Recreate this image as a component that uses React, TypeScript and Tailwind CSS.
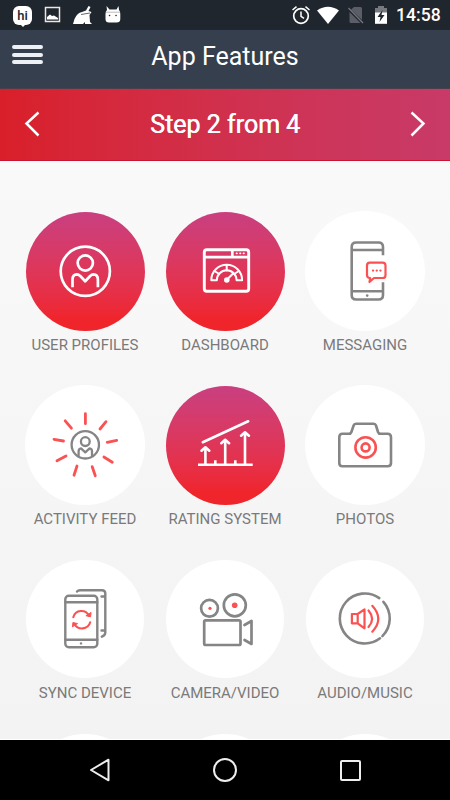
import type { ReactNode } from "react";
import clsx from "clsx";

const GRAY = "#858585";
const RED = "#fa5252";

function Glyph({ color, width = 2.4, children }: { color: string; width?: number; children: ReactNode }) {
  return (
    <svg
      viewBox="0 0 120 120"
      className="h-[120px] w-[120px]"
      fill="none"
      stroke={color}
      strokeWidth={width}
      strokeLinecap="round"
      strokeLinejoin="round"
    >
      {children}
    </svg>
  );
}

const UserIcon = () => (
  <Glyph color="#fff" width={2.7}>
    <circle cx="60.3" cy="60.3" r="24.6" />
    <circle cx="60.3" cy="52" r="7.6" />
    <path d="M47.5 76.2V68.5Q47.5 63.5 52 63.3Q53.7 63.3 55 64.8L60.2 70.3L65.4 64.8Q66.7 63.3 68.4 63.3Q72.9 63.5 72.9 68.5V76.2" strokeLinecap="butt" />
  </Glyph>
);

const DashboardIcon = () => (
  <Glyph color="#fff" width={2}>
    <rect x="39.3" y="38.8" width="44.4" height="41.4" rx="2.5" strokeWidth="2.9" />
    <path d="M39.3 46.2H83.7M67.3 39V46" strokeWidth="2.7" strokeLinecap="butt" />
    <path d="M71.5 42.3H72M75 42.3H75.5M78.5 42.3H79" strokeWidth="1.7" />
    <path d="M46.3 69.2A15.4 15.4 0 0 1 77.1 69.2H71.6A9.9 9.9 0 0 0 51.8 69.2Z" />
    <path d="M61.7 54V59.5M49.5 60L54.2 63M73.9 60L69.2 63" />
    <path d="M62 68.5L67.6 63" />
    <circle cx="61.8" cy="69" r="1.8" fill="#fff" />
  </Glyph>
);

const MessageIcon = () => (
  <Glyph color={GRAY} width={2.6}>
    <path d="M78 44.3V36Q78 31.5 73.5 31.5H51.2Q46.7 31.5 46.7 36V84Q46.7 88.5 51.2 88.5H73.5Q78 88.5 78 84V71.2" strokeLinecap="butt" />
    <path d="M46.7 39H78M46.7 80.3H78" strokeLinecap="butt" />
    <circle cx="62.2" cy="84.6" r="1.3" fill={GRAY} stroke="none" />
    <g stroke={RED} strokeWidth="2.2">
      <path d="M64.3 67Q62 66.6 62 64V54.5Q62 51.7 64.8 51.7H77.7Q80.5 51.7 80.5 54.5V64.2Q80.5 67 77.7 67H69L64.5 71L65.2 67.1Z" />
      <path d="M68 59.6H68.1M71.7 59.6H71.8M75.4 59.6H75.5" strokeWidth="2.3" />
    </g>
  </Glyph>
);

const ActivityIcon = () => (
  <Glyph color={GRAY} width={2.3}>
    <circle cx="60.3" cy="59.8" r="13.7" />
    <circle cx="60.3" cy="56.6" r="4.4" />
    <path d="M53.6 70.5V66.5Q53.6 63.5 56 63.3L60.3 67.3L64.6 63.3Q67 63.5 67 66.5V70.5" />
    <path
      stroke={RED}
      strokeWidth="2.8"
      d="M60.4 28.7V38.7M81 36.7L75 44M91.7 55.4L82.2 57.3M87.3 77.3L78.9 72M70.3 90.8L67.2 81.7M49 90.2L52 81M32 75.8L41 71M29 54.3L38.5 56M40.2 35.8L46.4 43.2"
    />
  </Glyph>
);

const RatingIcon = () => (
  <Glyph color="#fff" width={2.6}>
    <path d="M37.8 57.3L83.2 36.3" />
    <path d="M33 79.7H87.7M40.4 79V63M60.2 79V55.5M80 79V48M50.3 79V75.2M70.3 79V75.2" strokeLinecap="butt" />
    <path d="M36.5 65.7L40.4 62.3L44.3 65.7M56.3 58.2L60.2 54.8L64.1 58.2M76.1 50.7L80 47.3L83.9 50.7" />
  </Glyph>
);

const PhotoIcon = () => (
  <Glyph color={GRAY} width={2.6}>
    <path d="M37.5 48.8H43.8Q45.8 48.8 46.4 47L48.6 40.5Q49.2 38.8 51 38.8H68.6Q70.4 38.8 71 40.5L73 47Q73.6 48.8 75.6 48.8H82.5Q86 48.8 86 52.3V78Q86 81.3 82.5 81.3H37.5Q34.3 81.3 34.3 78V52.3Q34.3 48.8 37.5 48.8Z" />
    <g stroke={RED}>
      <circle cx="60.6" cy="62.4" r="10.2" />
      <circle cx="60.6" cy="62.4" r="4" />
    </g>
  </Glyph>
);

const SyncIcon = () => (
  <Glyph color={GRAY}>
    <rect x="40.3" y="36.8" width="32" height="51.4" rx="3.5" />
    <path d="M40.3 43.2H72.3M40.3 80.8H72.3" />
    <path d="M52 32.6Q53 31.3 55 31.3H77Q80.3 31.3 80.3 34.6V73.5Q80.3 76.5 76.8 77.7M76.5 37.5H80M76.5 71.5H80" />
    <circle cx="56" cy="84.4" r="1.2" fill={GRAY} stroke="none" />
    <g stroke={RED} strokeWidth="2.1">
      <path d="M48.3 58.2C50.5 50.5 60.5 50 64 56.7M65.2 63.3C63 71 53 71.3 49.3 65" />
      <path d="M61.3 56.8L65.6 57.8L66 53.8ZM52.2 64.5L47.9 63.5L47.5 67.5Z" fill={RED} strokeWidth="1" />
    </g>
  </Glyph>
);

const VideoIcon = () => (
  <Glyph color={GRAY} width={2.7}>
    <rect x="39.2" y="61.3" width="36.3" height="24.7" rx="1.5" />
    <circle cx="44.5" cy="49.3" r="8.4" />
    <circle cx="69.8" cy="46.3" r="11" />
    <path d="M79.5 66L86.5 62V85L79.5 81" />
    <circle cx="45" cy="49.3" r="1.6" fill={RED} stroke="none" />
    <circle cx="69.7" cy="46.3" r="2.8" fill={RED} stroke="none" />
  </Glyph>
);

const AudioIcon = () => (
  <Glyph color={GRAY} width={2.6}>
    <path d="M74.3 39.1A25 25 0 1 0 75 79.3M78.4 42.8A25 25 0 0 1 77.4 77.1" />
    <g stroke={RED} strokeWidth="2.2">
      <path d="M46.9 55H52.7L59.5 50.3V69.3L52.7 64.3H46.9ZM52.7 55V64.3" />
      <path d="M63.5 51.5Q70.7 59.8 63.5 68M67.3 46.8Q79.3 60 67.3 72.7" />
    </g>
  </Glyph>
);

const features = [
  { label: "USER PROFILES", icon: UserIcon, active: true },
  { label: "DASHBOARD", icon: DashboardIcon, active: true },
  { label: "MESSAGING", icon: MessageIcon },
  { label: "ACTIVITY FEED", icon: ActivityIcon },
  { label: "RATING SYSTEM", icon: RatingIcon, active: true },
  { label: "PHOTOS", icon: PhotoIcon },
  { label: "SYNC DEVICE", icon: SyncIcon, small: true },
  { label: "CAMERA/VIDEO", icon: VideoIcon, small: true },
  { label: "AUDIO/MUSIC", icon: AudioIcon, small: true },
];

function StatusBar() {
  return (
    <div className="flex h-[30px] shrink-0 items-center justify-between bg-[#20262d] pr-[9px] pl-[13px] text-white">
      <div className="flex items-center">
        <div className="relative flex h-[19px] w-[19px] items-center justify-center rounded-[6px] bg-white text-[13px] leading-none font-medium text-[#20262d]">
          hi
          <div className="absolute top-[18px] left-[7px] border-x-[3px] border-t-[3px] border-x-transparent border-t-white" />
        </div>
        <svg viewBox="0 0 18 18" className="ml-3 h-[18px] w-[18px]">
          <path d="M1.5 1.5H15.5V15.5H1.5Z" fill="none" stroke="#e8e8e8" strokeWidth="1.5" />
          <path d="M3 13.5V11L6 8.5L8 10L10 9.5L14 12V13.5Z" fill="#fff" />
        </svg>
        <svg viewBox="0 0 20 20" className="ml-[11px] h-5 w-5" fill="#fff">
          <path d="M0 19L1.5 14Q4 8 9 7L13 5.5L15.5 1L17.5 2L15.5 6L18.5 7L16.5 10L17 17L19 19H12V17L10 19Z" />
          <path d="M8 9.5L17 8" stroke="#20262d" strokeWidth=".7" />
        </svg>
        <svg viewBox="0 0 18 20" className="ml-[11px] h-5 w-[18px]" fill="#fff">
          <path d="M3 5L2.5 1L5.5 4.5H12.5L14.5 1L15 5Q16.3 6 16.3 9V14Q16.3 17.5 12.5 17.5H5Q1.5 17.5 1.5 14V9Q1.5 6 3 5Z" />
          <path d="M2 7.2H16" stroke="#aaa" strokeWidth=".8" />
          <path d="M5.5 10.5H5.6M12 10.5H12.1" stroke="#20262d" strokeWidth="1.5" strokeLinecap="round" />
        </svg>
      </div>
      <div className="flex items-center">
        <svg viewBox="0 0 20 20" className="h-5 w-5" fill="none" stroke="#fff" strokeWidth="1.7">
          <circle cx="10" cy="11" r="7.3" />
          <path d="M10 6.5V11.3L13 13.3M1.5 5L5.5 1.7M18.5 5L14.5 1.7" strokeWidth="1.5" />
        </svg>
        <svg viewBox="0 0 22 18" className="ml-[6px] h-[18px] w-[22px]" fill="#fff">
          <path d="M0 4.5Q11-3 22 4.5L11 18Z" />
        </svg>
        <svg viewBox="0 0 18 18" className="ml-2 h-[18px] w-[18px]">
          <path d="M7 1H13.5Q15 1 15 2.5V14L4 3.5ZM2.5 6L13.5 17H4Q2.5 17 2.5 15.5Z" fill="#5b5e68" />
          <path d="M1.5 2L16 17" stroke="#777981" strokeWidth="1.2" />
        </svg>
        <svg viewBox="0 0 14 20" className="ml-[9px] h-5 w-[14px]">
          <path d="M4 1H10V3H13V8H1V3H4Z" fill="#777981" />
          <path d="M1 7.5H13V18.8H1Z" fill="#fff" />
          <path d="M8.5 5L3.5 12H6.5L5.5 17L10.5 10H7.5Z" fill="#20262d" />
        </svg>
        <span className="ml-[8px] w-[45px] text-[17.6px] leading-[31px] font-medium whitespace-nowrap">14:58</span>
      </div>
    </div>
  );
}

export default function App() {
  return (
    <div className="flex h-[800px] w-[450px] flex-col overflow-hidden font-[Roboto,sans-serif]">
      <StatusBar />

      <header className="grid h-[59px] shrink-0 grid-cols-[60px_1fr_60px] border-b border-[#4a3f4a] bg-[#363f4d]">
        <div className="flex flex-col gap-[3.5px] pt-[15px] pl-3">
          <div className="h-1 w-[31px] rounded-full bg-[#edf0f4]" />
          <div className="h-1 w-[31px] rounded-full bg-[#edf0f4]" />
          <div className="h-1 w-[31px] rounded-full bg-[#edf0f4]" />
        </div>
        <h1 className="text-center text-[25px] leading-[54px] font-normal whitespace-nowrap text-white">App Features</h1>
      </header>

      <div className="flex h-[72px] shrink-0 items-center justify-between border-b border-b-[#c91432] bg-linear-to-r from-[#d91f29] to-[#c83a68] px-6 pb-px text-white">
        <svg viewBox="0 0 16 26" className="h-[26px] w-4" fill="none" stroke="#fff" strokeWidth="2.5">
          <path d="M14.5 1.5L2.5 12.5L14.5 24.5" />
        </svg>
        <span className="text-[25px] leading-none font-normal whitespace-nowrap [text-shadow:0.6px_0_0_#fff]">Step 2 from 4</span>
        <svg viewBox="0 0 16 26" className="h-[26px] w-4" fill="none" stroke="#fff" strokeWidth="2.5">
          <path d="M1.5 1.5L13.5 12.5L1.5 24.5" />
        </svg>
      </div>

      <main className="grid h-[579px] shrink-0 auto-rows-[174px] grid-cols-3 overflow-hidden border-b border-white bg-linear-to-b from-[#f9f9f9] to-[#f3f3f3] px-[15px] pt-[50px]">
        {features.map(({ label, icon: Icon, active, small }) => (
          <div key={label} className="flex flex-col items-center">
            <div className="grid h-[120px] w-[120px] place-items-center">
              <div
                className={clsx(
                  "col-start-1 row-start-1 rounded-full",
                  active && "h-[119px] w-[119px] bg-linear-to-b from-[#c93f80] to-[#f0242b] to-90%",
                  !active && small && "h-[118px] w-[118px] bg-white",
                  !active && !small && "h-[120px] w-[120px] bg-white"
                )}
              />
              <div className="col-start-1 row-start-1">
                <Icon />
              </div>
            </div>
            <span className="mt-1 text-[15px] leading-5 font-normal whitespace-nowrap text-[#7a7a7a]">{label}</span>
          </div>
        ))}
        {/* next row, just peeking over the nav bar */}
        {[0, 1, 2].map((i) => (
          <div key={i} className="flex justify-center pt-px">
            <div className="h-[118px] w-[118px] rounded-full bg-white" />
          </div>
        ))}
      </main>

      <nav className="grid h-[60px] shrink-0 grid-cols-3 items-center justify-items-center bg-black px-[37.5px]">
        <svg viewBox="0 0 24 26" className="h-[26px] w-6" fill="none" stroke="#eee" strokeWidth="2" strokeLinejoin="round">
          <path d="M3 13L20.5 2.7V23.3Z" />
        </svg>
        <div className="h-6 w-6 rounded-full border-2 border-[#eee]" />
        <div className="h-[21px] w-[21px] rounded-[2px] border-2 border-[#eee]" />
      </nav>
    </div>
  );
}
